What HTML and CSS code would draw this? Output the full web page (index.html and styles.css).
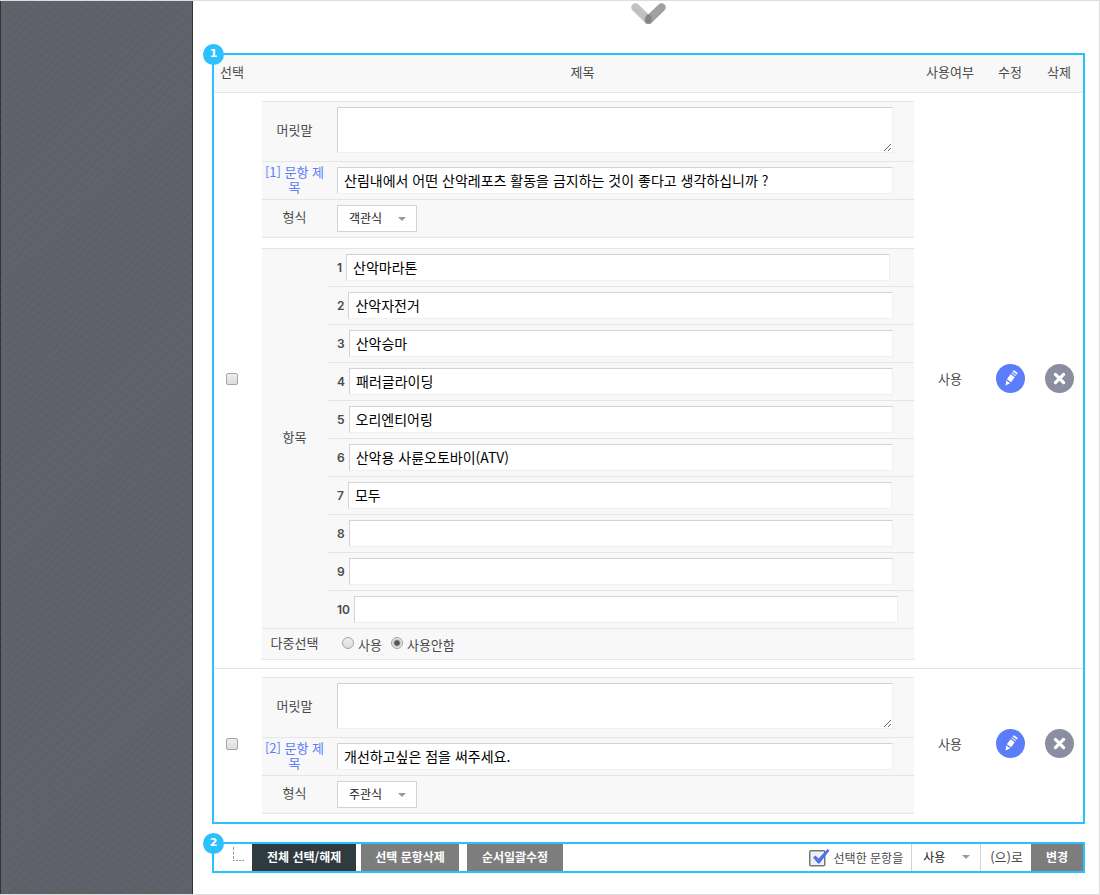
FILE: index.html
```html
<!DOCTYPE html>
<html lang="ko">
<head>
<meta charset="utf-8">
<meta name="viewport" content="width=device-width, initial-scale=1">
<title>설문 문항 관리</title>
<link rel="stylesheet" href="styles.css">
</head>
<body>
<svg class="sprite" aria-hidden="true">
  <symbol id="icon-edit" viewBox="0 0 29 29">
    <circle cx="14.500" cy="14.500" r="14.500" fill="#5b7df9"/>
    <g transform="rotate(36 14.500 14.500)" fill="#fff">
      <path d="M12 7.500V6.600q0-.9.9-.9h3.400q.9 0 .9.900v.9z"/>
      <path d="M12 8.500h5.200v1.200H12z" opacity=".8"/>
      <path d="M12 11h5.200v6.200H12z"/>
      <path d="M12.200 18.500h4.800l-2.400 4.500z"/>
    </g>
  </symbol>
  <symbol id="icon-delete" viewBox="0 0 29 29">
    <circle cx="14.500" cy="14.500" r="14.500" fill="#8b8ea0"/>
    <path d="M10.400 10.400l8.200 8.200M18.600 10.400l-8.200 8.200" stroke="#fff" stroke-width="3.200" stroke-linecap="round"/>
  </symbol>
</svg>
<div class="page">
  <aside class="sidebar"></aside>
  <main class="main">
    <svg class="chevron" viewBox="0 0 35 21" aria-hidden="true">
      <path d="M4.500 4.500L17.500 17" stroke="#c1c1c1" stroke-width="8.500" stroke-linecap="round"/>
      <path d="M30.500 4.500L17.500 17" stroke="#a1a1a1" stroke-width="8.500" stroke-linecap="round"/>
      <ellipse cx="17.500" cy="16" rx="3.200" ry="4.500" fill="#868686"/>
    </svg>

    <section class="panel">
      <span class="badge">1</span>
      <table class="questions">
        <colgroup>
          <col class="col-check"><col><col class="col-use"><col class="col-edit"><col class="col-delete">
        </colgroup>
        <thead>
          <tr><th scope="col">선택</th><th scope="col">제목</th><th scope="col">사용여부</th><th scope="col">수정</th><th scope="col">삭제</th></tr>
        </thead>
        <tbody>
          <tr>
            <td><input class="check" type="checkbox" aria-label="1번 문항 선택"></td>
            <td class="detail">
              <div class="form">
                <div class="row">
                  <label class="name" for="intro1">머릿말</label>
                  <div class="field"><textarea class="intro" id="intro1"></textarea></div>
                </div>
                <div class="row">
                  <label class="name name-link" for="title1">[1] 문항 제목</label>
                  <div class="field"><input class="text" id="title1" type="text" value="산림내에서 어떤 산악레포츠 활동을 금지하는 것이 좋다고 생각하십니까 ?"></div>
                </div>
                <div class="row">
                  <label class="name" for="type1">형식</label>
                  <div class="field"><span class="dropdown"><select class="select" id="type1"><option>객관식</option><option>주관식</option></select></span></div>
                </div>
              </div>
              <div class="form">
                <div class="row">
                  <div class="name" id="items">항목</div>
                  <div class="items" role="group" aria-labelledby="items">
                    <div class="item"><label class="number" for="i1">1</label><input class="text" id="i1" type="text" value="산악마라톤"></div>
                    <div class="item"><label class="number" for="i2">2</label><input class="text" id="i2" type="text" value="산악자전거"></div>
                    <div class="item"><label class="number" for="i3">3</label><input class="text" id="i3" type="text" value="산악승마"></div>
                    <div class="item"><label class="number" for="i4">4</label><input class="text" id="i4" type="text" value="패러글라이딩"></div>
                    <div class="item"><label class="number" for="i5">5</label><input class="text" id="i5" type="text" value="오리엔티어링"></div>
                    <div class="item"><label class="number" for="i6">6</label><input class="text" id="i6" type="text" value="산악용 사륜오토바이(ATV)"></div>
                    <div class="item"><label class="number" for="i7">7</label><input class="text" id="i7" type="text" value="모두"></div>
                    <div class="item"><label class="number" for="i8">8</label><input class="text" id="i8" type="text"></div>
                    <div class="item"><label class="number" for="i9">9</label><input class="text" id="i9" type="text"></div>
                    <div class="item"><label class="number" for="i10">10</label><input class="text" id="i10" type="text"></div>
                  </div>
                </div>
                <div class="row">
                  <div class="name" id="multi">다중선택</div>
                  <div class="choices" role="radiogroup" aria-labelledby="multi">
                    <input class="radio" type="radio" name="multi" id="multi-on"><label class="choice" for="multi-on">사용</label>
                    <input class="radio" type="radio" name="multi" id="multi-off" checked><label class="choice" for="multi-off">사용안함</label>
                  </div>
                </div>
              </div>
            </td>
            <td class="status">사용</td>
            <td><button class="action" type="button" aria-label="수정"><svg><use href="#icon-edit"/></svg></button></td>
            <td><button class="action" type="button" aria-label="삭제"><svg><use href="#icon-delete"/></svg></button></td>
          </tr>
          <tr>
            <td><input class="check" type="checkbox" aria-label="2번 문항 선택"></td>
            <td class="detail">
              <div class="form">
                <div class="row">
                  <label class="name" for="intro2">머릿말</label>
                  <div class="field"><textarea class="intro" id="intro2"></textarea></div>
                </div>
                <div class="row">
                  <label class="name name-link" for="title2">[2] 문항 제목</label>
                  <div class="field"><input class="text" id="title2" type="text" value="개선하고싶은 점을 써주세요."></div>
                </div>
                <div class="row">
                  <label class="name" for="type2">형식</label>
                  <div class="field"><span class="dropdown"><select class="select" id="type2"><option>주관식</option><option>객관식</option></select></span></div>
                </div>
              </div>
            </td>
            <td class="status">사용</td>
            <td><button class="action" type="button" aria-label="수정"><svg><use href="#icon-edit"/></svg></button></td>
            <td><button class="action" type="button" aria-label="삭제"><svg><use href="#icon-delete"/></svg></button></td>
          </tr>
        </tbody>
      </table>
    </section>

    <section class="panel toolbar">
      <span class="badge">2</span>
      <svg class="branch" viewBox="0 0 12 15" aria-hidden="true">
        <path d="M.5 0V14" stroke="#999" stroke-dasharray="3 1.500"/>
        <path d="M0 13.500H11" stroke="#999" stroke-dasharray="2 1"/>
      </svg>
      <button class="button button-dark" type="button">전체 선택/해제</button>
      <button class="button button-remove" type="button">선택 문항삭제</button>
      <button class="button" type="button">순서일괄수정</button>
      <div class="bulk">
        <label class="bulk-label" for="bulk-state">
          <svg class="tick" viewBox="0 0 21 18" aria-hidden="true">
            <rect x=".75" y="1.750" width="15" height="15" rx="1" fill="#f1f1f1" stroke="#777" stroke-width="1.500"/>
            <path d="M4 8.500L6.500 6.500L9.500 9.500L18.500 0L20.500 1.500L10.500 14.500H9z" fill="#4f72f0"/>
          </svg>
          선택한 문항을
        </label>
        <span class="dropdown dropdown-bulk"><select class="select" id="bulk-state"><option>사용</option><option>사용안함</option></select></span>
        <span class="particle">(으)로</span>
        <button class="button" type="button">변경</button>
      </div>
    </section>
  </main>
</div>
</body>
</html>
```
FILE: styles.css
```css
* {
  box-sizing: border-box;
}

body {
  margin: 0;
  background: #fff;
  color: #4a4a4a;
  font: 13px/16px "Noto Sans CJK KR", sans-serif;
}

button,
input,
select,
textarea {
  margin: 0;
  border-radius: 0;
  font: inherit;
}

.sprite {
  display: none;
}

.page {
  display: flex;
  min-height: 100vh;
  border: 1px solid #ddd;
  border-left: 0;
}

.sidebar {
  flex: 0 0 193px;
  border: solid #333;
  border-width: 0 1px;
  background:
    repeating-linear-gradient(135deg, rgba(0, 0, 0, 0.02) 0 2px, transparent 2px 6px),
    repeating-linear-gradient(30deg, rgba(255, 255, 255, 0.01) 0 2px, transparent 2px 7px),
    #5f626a;
}

.main {
  flex: 1;
  min-width: 0;
  padding: 2px 14px 20px 19px;
}

.chevron {
  display: block;
  width: 35px;
  height: 21px;
  margin: 0 auto 29px;
}

.panel {
  position: relative;
  border: 2px solid #2bc0fe;
}

.badge {
  position: absolute;
  top: -11px;
  left: -11px;
  width: 21px;
  height: 21px;
  border-radius: 50%;
  background: #2bc0fe;
  color: #fff;
  font: bold 11px/20px "DejaVu Sans", sans-serif;
  text-align: center;
}

.questions {
  width: 100%;
  border-collapse: separate;
  border-spacing: 0;
  table-layout: fixed;
}

.col-check {
  width: 36px;
}

.col-use {
  width: 70px;
}

.col-edit {
  width: 50px;
}

.col-delete {
  width: 48px;
}

.questions th {
  height: 38px;
  padding: 0 0 3px;
  border-bottom: 1px solid #e5e5e5;
  background: #f8f8f8;
  font-weight: normal;
}

.questions td {
  padding: 0 0 4px;
  text-align: center;
  vertical-align: middle;
}

.questions tr:not(:last-child) td {
  border-bottom: 1px solid #e5e5e5;
}

.questions td.detail {
  padding: 8px 1px 8px 12px;
  text-align: left;
}

.form {
  border-bottom: 1px solid #e5e5e5;
  background: #f8f8f8;
}

.form + .form {
  margin-top: 10px;
}

.row {
  display: grid;
  grid-template-columns: 65px 1fr;
  align-items: center;
  border-top: 1px solid #e5e5e5;
}

.name {
  padding-bottom: 4px;
  text-align: center;
  line-height: 15px;
}

.name-link {
  color: #5b7df9;
}

.field {
  padding: 5px 10px;
}

.text,
.intro {
  display: block;
  width: 98%;
  height: 27px;
  padding: 0 6px 2px;
  border: 1px solid #f0f0f0;
  border-top-color: #d2d2d2;
  border-left-color: #d2d2d2;
  background: #fff;
  color: #000;
  font-size: 14px;
}

.intro {
  height: 46px;
  margin-bottom: 3px;
}

.item {
  display: flex;
  align-items: center;
  gap: 4px;
  padding: 5px 10px;
}

.item + .item {
  border-top: 1px solid #e5e5e5;
}

.item .text {
  flex: none;
  width: 96%;
}

.number {
  font-family: Inter, sans-serif;
  font-size: 12px;
  font-weight: 600;
}

.dropdown {
  position: relative;
  display: block;
  width: 80px;
  height: 27px;
  border: 1px solid #d2d2d2;
  background: #fff;
}

.dropdown::after {
  content: "";
  position: absolute;
  top: 11px;
  right: 10px;
  border: 4px solid transparent;
  border-top-color: #999;
  border-bottom: 0;
  pointer-events: none;
}

.select {
  width: 100%;
  height: 100%;
  padding: 0 11px 2px;
  border: 0;
  appearance: none;
  background: transparent;
  color: #222;
  font-size: 12px;
}

.check,
.radio {
  display: block;
  width: 12px;
  height: 12px;
  margin: 0 auto;
  border: 1px solid #a5a5a5;
  border-radius: 2px;
  appearance: none;
  background: linear-gradient(#eee, #dcdcdc);
}

.radio {
  margin: 0;
  border-radius: 50%;
}

.radio:checked {
  background: radial-gradient(circle, #555 0 2px, #e5e5e5 4px);
}

.choices {
  display: flex;
  align-items: center;
  height: 30px;
  padding: 0 15px 2px;
}

.choice {
  padding: 3px 9px 0 4px;
}

.action {
  display: block;
  width: 29px;
  height: 29px;
  margin: 0 auto;
  padding: 0;
  border: 0;
  background: none;
}

.action svg {
  display: block;
  width: 29px;
  height: 29px;
}

.toolbar {
  display: flex;
  margin-top: 18px;
}

.branch {
  width: 12px;
  height: 15px;
  margin: 3px 7px 0 19px;
}

.button {
  height: 27px;
  padding: 0 15px 2px;
  border: 0;
  background: #7d7d7d;
  color: #fff;
  font-size: 12px;
  font-weight: bold;
  white-space: nowrap;
}

.button-dark {
  background: #2f3a41;
}

.button-remove {
  margin: 0 8px 0 5px;
  padding: 0 14px 2px;
}

.bulk {
  display: flex;
  align-items: center;
  margin-left: auto;
}

.bulk-label {
  display: flex;
  align-items: center;
  gap: 4px;
  padding-right: 8px;
  font-size: 12px;
}

.tick {
  width: 21px;
  height: 18px;
}

.dropdown-bulk {
  width: 70px;
  border-width: 0 1px;
}

.particle {
  padding: 0 8px 2px 9px;
}
```
